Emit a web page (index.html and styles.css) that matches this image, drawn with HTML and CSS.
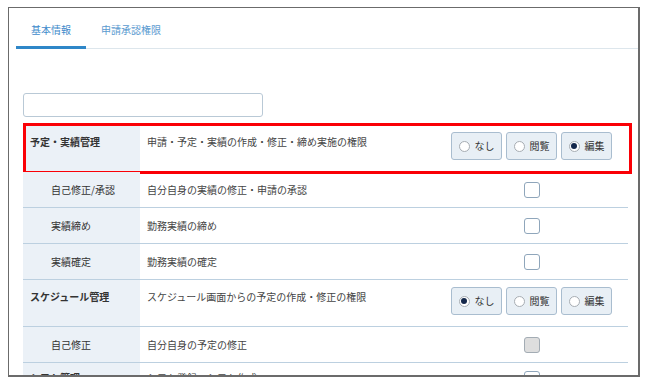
FILE: index.html
```html
<!DOCTYPE html>
<html lang="ja">
<head>
<meta charset="utf-8">
<link rel="stylesheet" href="styles.css">
</head>
<body>
<div class="frame">
  <div class="tabs">
    <div class="tab active">基本情報</div>
    <div class="tab">申請承認権限</div>
  </div>
  <div class="content">
    <input class="search" type="text">
    <div class="table">
      <div class="row main highlight">
        <div class="label">予定・実績管理</div>
        <div class="desc">申請・予定・実績の作成・修正・締め実施の権限</div>
        <div class="ctrl">
          <div class="seg">
            <span class="opt"><span class="radio"></span>なし</span>
            <span class="opt"><span class="radio"></span>閲覧</span>
            <span class="opt"><span class="radio on"></span>編集</span>
          </div>
        </div>
      </div>
      <div class="row sub">
        <div class="label">自己修正/承認</div>
        <div class="desc">自分自身の実績の修正・申請の承認</div>
        <div class="ctrl"><span class="check"></span></div>
      </div>
      <div class="row sub">
        <div class="label">実績締め</div>
        <div class="desc">勤務実績の締め</div>
        <div class="ctrl"><span class="check"></span></div>
      </div>
      <div class="row sub">
        <div class="label">実績確定</div>
        <div class="desc">勤務実績の確定</div>
        <div class="ctrl"><span class="check"></span></div>
      </div>
      <div class="row main">
        <div class="label">スケジュール管理</div>
        <div class="desc">スケジュール画面からの予定の作成・修正の権限</div>
        <div class="ctrl">
          <div class="seg">
            <span class="opt"><span class="radio on"></span>なし</span>
            <span class="opt"><span class="radio"></span>閲覧</span>
            <span class="opt"><span class="radio"></span>編集</span>
          </div>
        </div>
      </div>
      <div class="row sub">
        <div class="label">自己修正</div>
        <div class="desc">自分自身の予定の修正</div>
        <div class="ctrl"><span class="check disabled"></span></div>
      </div>
      <div class="row main last">
        <div class="label">シフト管理</div>
        <div class="desc">シフト登録・シフト作成</div>
        <div class="ctrl top"><span class="check"></span></div>
      </div>
    </div>
  </div>
</div>
</body>
</html>
```

FILE: styles.css
```css
html, body {
  margin: 0;
  padding: 0;
  background: #ffffff;
}
body {
  font-family: "Noto Sans CJK JP", "Noto Sans", sans-serif;
  font-size: 10px;
  color: #333;
}
.frame {
  margin: 7px 0 0 8px;
  width: 629px;
  height: 367px;
  border-top: 1px solid #6b6b6b;
  border-left: 1px solid #6b6b6b;
  border-right: 2px solid #6b6b6b;
  border-bottom: 2px solid #6b6b6b;
  overflow: hidden;
  background: #fff;
}
.tabs {
  display: flex;
  margin-left: 7px;
  border-bottom: 1px solid #dde6ec;
}
.tab {
  padding: 15px 15px 9px;
  line-height: 14px;
  color: #5a9ad0;
  border-bottom: 3px solid transparent;
  margin-bottom: -1px;
}
.tab.active {
  color: #3f8bcb;
  border-bottom-color: #2f87c8;
}
.content {
  padding: 44px 10px 0 14px;
}
.search {
  display: block;
  box-sizing: border-box;
  width: 240px;
  height: 24px;
  margin: 0;
  border: 1px solid #b9c9d6;
  border-radius: 3px;
  background: #fff;
}
.table {
  margin-top: 8px;
}
.row {
  display: grid;
  grid-template-columns: 117px 1fr 193px;
  border-bottom: 1px solid #bcd0e0;
  line-height: 14px;
  position: relative;
}
.row.main {
  min-height: 46px;
}
.row.sub {
  height: 35px;
  align-items: center;
}
.row.sub > div {
  height: 100%;
  display: flex;
  align-items: center;
}
.label {
  background: #ebf1f7;
  color: #333;
}
.row.main .label {
  font-weight: bold;
  padding: 10px 0 0 7px;
}
.row.sub .label {
  padding-left: 28px;
}
.desc {
  padding-left: 7px;
  color: #444;
}
.row.main .desc {
  padding-top: 10px;
}
.row.main.last .label,
.row.main.last .desc {
  padding-top: 8px;
}
.ctrl {
  display: flex;
  justify-content: center;
}
.row.main .ctrl {
  padding-top: 7px;
  align-items: flex-start;
}
.row.main .ctrl.top {
  padding-top: 8px;
}
.highlight::after {
  content: "";
  position: absolute;
  top: -2px;
  left: 0;
  right: -4px;
  bottom: -3px;
  border: 3px solid #fa0006;
  pointer-events: none;
}
.seg {
  display: flex;
  gap: 4px;
}
.opt {
  box-sizing: border-box;
  width: 51px;
  height: 28px;
  display: flex;
  align-items: center;
  justify-content: center;
  gap: 5px;
  background: #e8eff5;
  border: 1px solid #a9bdcf;
  border-radius: 3px;
  color: #333;
}
.radio {
  box-sizing: border-box;
  width: 11px;
  height: 11px;
  border-radius: 50%;
  border: 1px solid #a7adb3;
  background: #fff;
  position: relative;
}
.radio.on::after {
  content: "";
  position: absolute;
  left: 1.5px;
  top: 1.5px;
  width: 6px;
  height: 6px;
  border-radius: 50%;
  background: #14284b;
}
.check {
  box-sizing: border-box;
  width: 16px;
  height: 16px;
  border: 1px solid #8fa6bb;
  border-radius: 3px;
  background: #fff;
}
.check.disabled {
  background: #dedede;
  border-color: #a3acb4;
}
```
